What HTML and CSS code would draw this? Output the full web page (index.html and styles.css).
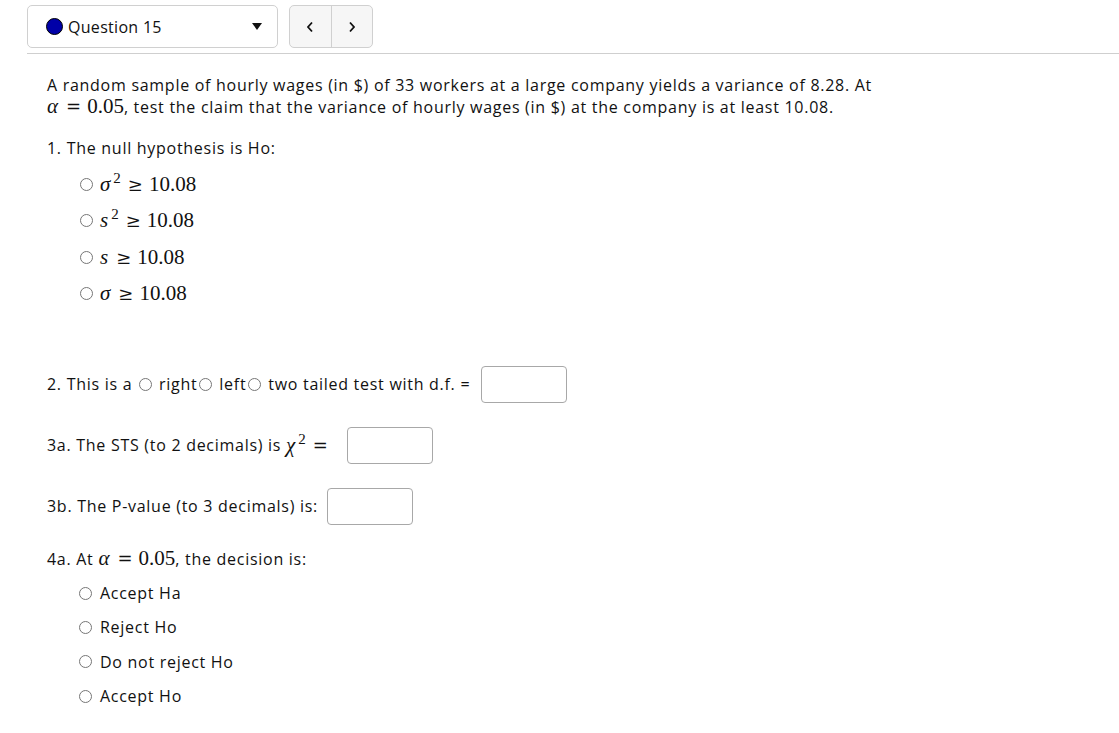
FILE: index.html
```html
<!DOCTYPE html>
<html>
<head>
<meta charset="utf-8">
<link rel="stylesheet" href="styles.css">
</head>
<body>
<div class="topbar">
  <div class="qselect">
    <span class="dot"></span>
    <span class="qlabel">Question 15</span>
    <span class="caret"></span>
  </div>
  <div class="nav">
    <button class="navbtn">
      <svg width="8" height="12" viewBox="0 0 8 12"><path d="M6 1.5 L2 6 L6 10.5" fill="none" stroke="#111" stroke-width="1.8"/></svg>
    </button>
    <button class="navbtn sep">
      <svg width="8" height="12" viewBox="0 0 8 12"><path d="M2 1.5 L6 6 L2 10.5" fill="none" stroke="#111" stroke-width="1.8"/></svg>
    </button>
  </div>
</div>
<div class="rule"></div>

<div class="content">
  <p class="intro">A random sample of hourly wages (in $) of 33 workers at a large company yields a variance of 8.28. At<br><span class="m"><i>α</i><span class="rel">=</span>0.05</span>, test the claim that the variance of hourly wages (in $) at the company is at least 10.08.</p>

  <p class="q q1">1. The null hypothesis is Ho:</p>
  <ul class="opts mathopts">
    <li><input type="radio" name="h0"><span class="m"><i>σ</i><sup>2</sup><span class="rel">≥</span>10.08</span></li>
    <li><input type="radio" name="h0"><span class="m"><i>s</i><sup>2</sup><span class="rel">≥</span>10.08</span></li>
    <li><input type="radio" name="h0"><span class="m"><i>s</i><span class="rel">≥</span>10.08</span></li>
    <li><input type="radio" name="h0"><span class="m"><i>σ</i><span class="rel">≥</span>10.08</span></li>
  </ul>

  <p class="q q2">2. This is a <input type="radio" name="tail" class="inl"> right<input type="radio" name="tail" class="inl"> left<input type="radio" name="tail" class="inl"> two tailed test with d.f. = <input type="text" class="box df"></p>

  <p class="q q3a">3a. The STS (to 2 decimals) is <span class="m"><i>χ</i><sup>2</sup><span class="rel">=</span></span><input type="text" class="box wide"></p>

  <p class="q q3b">3b. The P-value (to 3 decimals) is: <input type="text" class="box"></p>

  <p class="q q4a">4a. At <span class="m"><i>α</i><span class="rel">=</span>0.05</span>, the decision is:</p>
  <ul class="opts textopts">
    <li><input type="radio" name="dec">Accept Ha</li>
    <li><input type="radio" name="dec">Reject Ho</li>
    <li><input type="radio" name="dec">Do not reject Ho</li>
    <li><input type="radio" name="dec">Accept Ho</li>
  </ul>
</div>
</body>
</html>
```

FILE: styles.css
```css
html, body {
  margin: 0;
  padding: 0;
  background: #fff;
}
body {
  font-family: "Open Sans", sans-serif;
  font-size: 16px;
  letter-spacing: 0.72px;
  color: #111;
}
.topbar {
  display: flex;
  gap: 11px;
  padding: 5px 0 0 27px;
}
.qselect {
  box-sizing: border-box;
  width: 251px;
  height: 43px;
  border: 1px solid #d0d0d0;
  border-radius: 5px;
  display: flex;
  align-items: center;
  padding: 0 12px 0 18px;
}
.dot {
  box-sizing: border-box;
  width: 17px;
  height: 17px;
  border-radius: 50%;
  background: #0000a8;
  border: 1.5px solid #000;
  margin-right: 5px;
}
.qlabel {
  flex: 1;
  font-size: 16px;
  letter-spacing: 0.3px;
}
.caret {
  width: 0;
  height: 0;
  border-left: 5px solid transparent;
  border-right: 5px solid transparent;
  border-top: 7px solid #111;
  margin-right: 3px;
}
.nav {
  box-sizing: border-box;
  display: flex;
  width: 84px;
  height: 43px;
  border: 1px solid #d0d0d0;
  border-radius: 5px;
  background: #f6f6f6;
  overflow: hidden;
}
.navbtn {
  flex: 1;
  border: none;
  background: transparent;
  display: flex;
  align-items: center;
  justify-content: center;
  padding: 0;
}
.navbtn.sep {
  border-left: 1px solid #d0d0d0;
}
.rule {
  margin: 5px 0 0 27px;
  border-top: 1px solid #cfcfcf;
}
.content {
  padding-left: 47px;
}
p {
  margin: 0;
}
.intro {
  margin-top: 21px;
  line-height: 21px;
}
.m {
  font-family: "Liberation Serif", serif;
  font-size: 21px;
  letter-spacing: 0;
  line-height: 21px;
}
.m i {
  margin-right: 1px;
}
.m sup {
  font-size: 15px;
  vertical-align: 8px;
  line-height: 0;
  margin-left: 2px;
}
.rel {
  font-family: "DejaVu Serif", serif;
  font-size: 18px;
  margin: 0 6px 0 7px;
}
.q {
  line-height: 21px;
}
.q1 {
  margin-top: 20px;
}
.opts {
  list-style: none;
  margin: 0;
  padding: 0 0 0 29px;
}
.opts input {
  margin: 0 7px 0 4px;
  width: 13px;
  height: 13px;
}
.mathopts li {
  height: 36.5px;
  display: flex;
  align-items: center;
}
.mathopts {
  margin-top: 7px;
}
.textopts li {
  height: 34.3px;
  display: flex;
  align-items: center;
}
.textopts input {
  margin: 0 8px 0 3px;
}
.textopts {
  margin-top: 6px;
}
.q2 {
  margin-top: 54px;
  display: flex;
  align-items: center;
  white-space: pre;
}
.inl {
  margin: 0 2px;
  width: 13px;
  height: 13px;
}
.box {
  box-sizing: border-box;
  width: 86px;
  height: 37px;
  border: 1px solid #a8a8a8;
  border-radius: 4px;
  margin: 0 0 0 4px;
  font-size: 16px;
}
.box.df {
  margin-left: 6px;
}
.box.wide {
  margin-left: 13px;
}
.q3a, .q3b {
  display: flex;
  align-items: center;
  white-space: pre;
}
.q3a {
  margin-top: 24px;
}
.q3b {
  margin-top: 24px;
}
.q4a {
  margin-top: 23px;
}
```
